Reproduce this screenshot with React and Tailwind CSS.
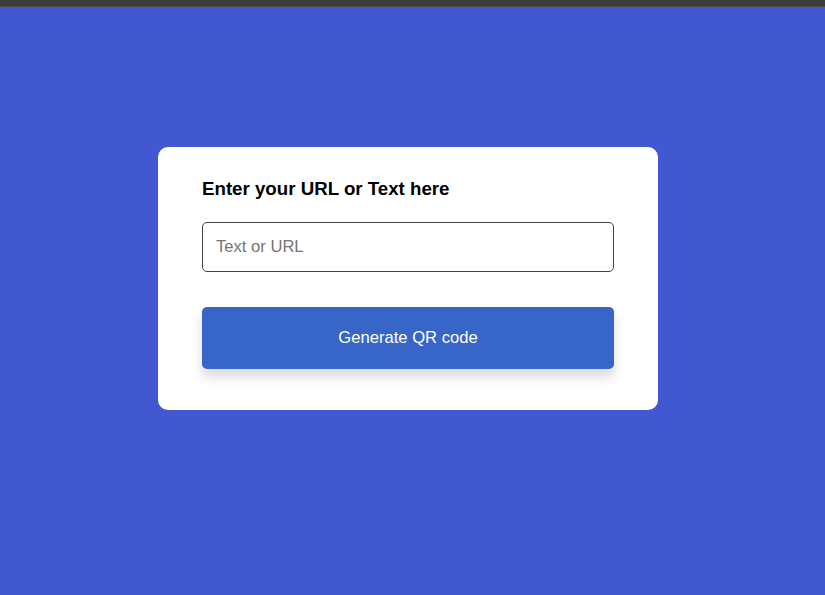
export default function App() {
  return (
    <div className="w-[825px] h-[595px] flex flex-col bg-[#4158d0]" style={{ fontFamily: '"Liberation Sans", Arial, sans-serif' }}>
      <div className="h-[6px] bg-[#3b3b3b] border-b border-[#4d4d4d] box-content"></div>
      <div className="flex justify-center pt-[140px] pr-[9px]">
        <div className="w-[500px] h-[263px] bg-white rounded-[10px] px-[44px] pt-[31px] flex flex-col">
          <h1 className="text-[18.7px] leading-[21px] font-bold text-black">Enter your URL or Text here</h1>
          <input
            type="text"
            placeholder="Text or URL"
            className="mt-[23px] h-[50px] w-full border border-[#444] rounded-[5px] px-[13px] text-[16.6px] placeholder:text-[#757575] outline-none"
          />
          <button className="mt-[35px] h-[62px] w-full bg-[#3766c8] rounded-[5px] text-white text-[16.6px] shadow-[0_8px_12px_rgba(0,0,0,0.15)]">
            Generate QR code
          </button>
        </div>
      </div>
    </div>
  );
}
